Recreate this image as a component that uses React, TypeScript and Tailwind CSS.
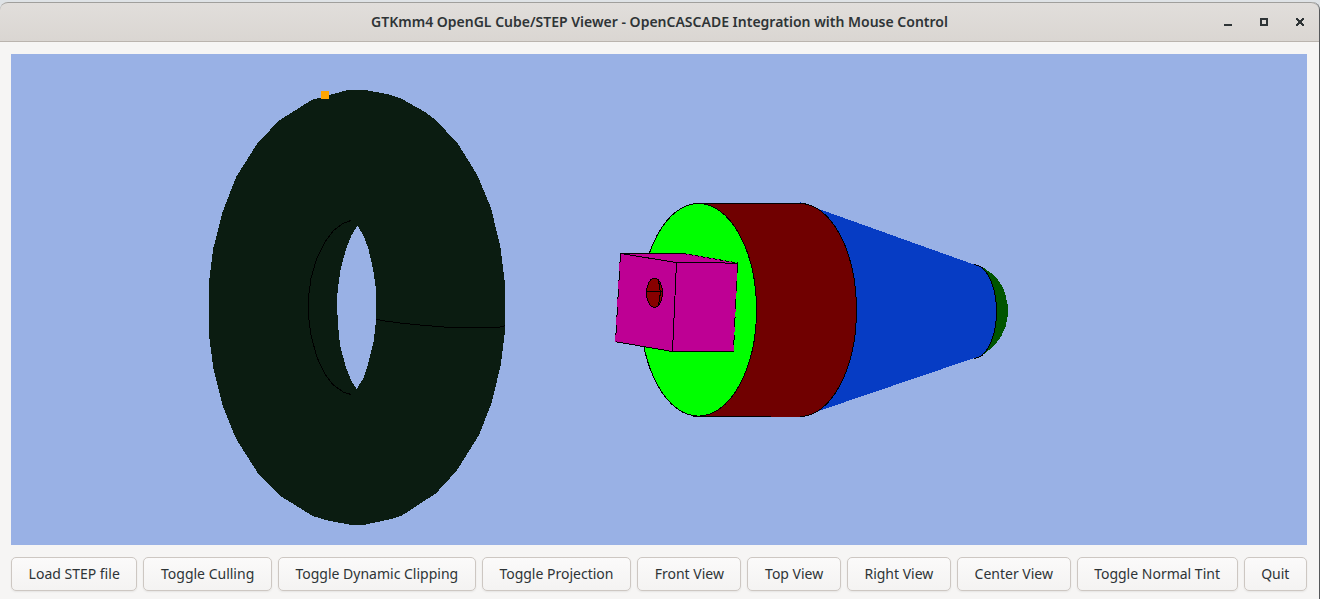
import type { ReactNode } from "react";

const actions = [
  "Load STEP file",
  "Toggle Culling",
  "Toggle Dynamic Clipping",
  "Toggle Projection",
  "Front View",
  "Top View",
  "Right View",
  "Center View",
  "Toggle Normal Tint",
  "Quit",
];

function WindowControl({ label, children }: { label: string; children: ReactNode }) {
  return (
    <button type="button" aria-label={label} className="flex size-6 items-center justify-center rounded-full text-[#2e3436]">
      <svg viewBox="0 0 8 8" className="size-2" shapeRendering="crispEdges" aria-hidden="true">
        {children}
      </svg>
    </button>
  );
}

function TitleBar() {
  return (
    <header className="grid h-10 grid-cols-[1fr_auto_1fr] items-center rounded-t-lg border-y border-t-[#a09f9c] border-b-[#bab4ae] bg-linear-to-b from-[#e1dedb] to-[#dad6d2] px-[7px]">
      <h1 className="col-start-2 text-sm font-semibold whitespace-nowrap text-[#2e3436]">
        GTKmm4 OpenGL Cube/STEP Viewer - OpenCASCADE Integration with Mouse Control
      </h1>
      <div className="flex justify-end gap-3">
        <WindowControl label="Minimize">
          <path d="M0 6h8v2H0z" fill="currentColor" />
        </WindowControl>
        <WindowControl label="Maximize">
          <path d="M0 0h8v8H0zM2 2v4h4V2z" fill="currentColor" fillRule="evenodd" />
        </WindowControl>
        <WindowControl label="Close">
          <path d="M0 0h2v1h1v1h2V1h1V0h2v2H7v1H6v2h1v1h1v2H6V7H5V6H3v1H2v1H0V6h1V5h1V3H1V2H0z" fill="currentColor" />
        </WindowControl>
      </div>
    </header>
  );
}

function Torus() {
  return (
    <g>
      <path
        fill="#0b1c11"
        fillRule="evenodd"
        d="M348.3 90H365L376 92L387 94L401 98.5L425 112L435 119.5L457 142.5L468 160L477.7 176L491 208L500.3 246.7L504.7 281.7V333L500.7 365L491.7 402.7L479 435L456.7 470.7L436 493.3L401.7 515.7L390 519.3L365 524.7H350L326.7 520.3L312.7 516L279.3 495.3L257.3 472.3L236 438.7L222.7 406L213.3 368.3L209 335V281.7L213.3 248.3L222.7 211.7L236 177.3L257.3 143.3L279.3 120.3L311.7 100L334 93.7Z
        M357.3 225.5L363.3 235L368.3 248.3L373.3 270L376 289.3V320L373.7 341.7L368.3 363.3L363.3 378.3L356.7 389L351.7 381.7L345.7 366.7L340 345L338 325L337 305V298L338 288L340.3 271L345.7 250L351.7 235Z"
      />
      <g fill="none" stroke="#000">
        <path d="M351 220.5L343.3 223.3L333.3 230.7L325 241.7L316.7 258.3L311 278.3L308.5 296.7V316.7L311 335L316.7 356.7L325 374.3L333.3 385L343.3 392L351 394.5" />
        <path d="M376 319L381.5 320.5L400 323L420 325L450 327.5H498L505.5 325.5" />
      </g>
      <path d="M321 91h8v8h-8z" fill="#ffa500" />
    </g>
  );
}

function StepPart() {
  return (
    <g>
      <path
        fill="#005500"
        d="M975 264L984 268L991.7 273.5L998 280L1002.7 287L1005.5 295L1008 306.7V315L1005.5 326.7L1001 336.7L994 346L984 354L975 358Z"
      />
      <path fill="#063cc4" d="M800 202.3L973.5 264.3A23.5 47 0 0 1 973.5 358.3L800 417.3Z" />
      <path fill="none" stroke="#000" d="M973.5 264.5A23 47 0 0 1 973.5 358.5" />
      <path fill="#700000" d="M698 203H800A57 107 0 0 1 800 417H698Z" />
      <path fill="none" stroke="#000" d="M698 203.5H800A56.5 106.5 0 0 1 800 416.5M771 416.5H693" />
      <ellipse cx="698.5" cy="309.8" rx="58" ry="106.3" fill="#00ff00" stroke="#000" />
      <path fill="#be0094" d="M620 253H683.5L738 263L733.5 352H672.5L615 342Z" />
      <g fill="none" stroke="#000">
        <path d="M620.5 253.5H683.5M615.5 341.7L672.3 351.5H733.5M620.5 253.5L676.5 262.5H704L737.5 263.3M676.5 262.5L672.5 351.5" />
        <path d="M683.5 253.5L737.5 263" strokeDasharray="4 2" />
        <path d="M620.5 253.5L615.5 342M737.5 263.5L733.5 351.5" strokeDasharray="10 8" />
        <ellipse cx="654.5" cy="292.7" rx="8" ry="14.5" fill="#880000" />
        <path d="M647 291.5H662M658 279.5Q662.5 293 658 306" />
      </g>
    </g>
  );
}

function Viewport() {
  return (
    <main className="relative min-h-60 flex-1 bg-[#99b1e5]">
      <svg
        viewBox="11 54 1296 491"
        className="absolute inset-0 size-full"
        shapeRendering="crispEdges"
        role="img"
        aria-label="3D viewport"
      >
        <Torus />
        <StepPart />
      </svg>
    </main>
  );
}

export default function App() {
  return (
    <div className="flex min-h-screen flex-col bg-[#dfe3e6] pt-0.5 font-['Noto_Sans','Open_Sans',sans-serif]">
      <div className="flex flex-1 flex-col rounded-t-lg border-r border-[#55575a] bg-[#f6f5f4]">
        <TitleBar />
        <div className="flex flex-1 flex-col gap-3 pt-3 pr-3 pb-2 pl-[11px]">
          <Viewport />
          <nav aria-label="Viewer actions" className="flex flex-wrap gap-1.5">
            {actions.map((label) => (
              <button
                key={label}
                type="button"
                className="h-[34px] flex-auto rounded-[5px] border border-[#cdc7c2] bg-linear-to-b from-[#fbfafa] to-[#f4f3f2] px-3.5 text-sm whitespace-nowrap text-[#2e3436] shadow-[0_1px_2px_rgba(0,0,0,0.07)]"
              >
                {label}
              </button>
            ))}
          </nav>
        </div>
      </div>
    </div>
  );
}
